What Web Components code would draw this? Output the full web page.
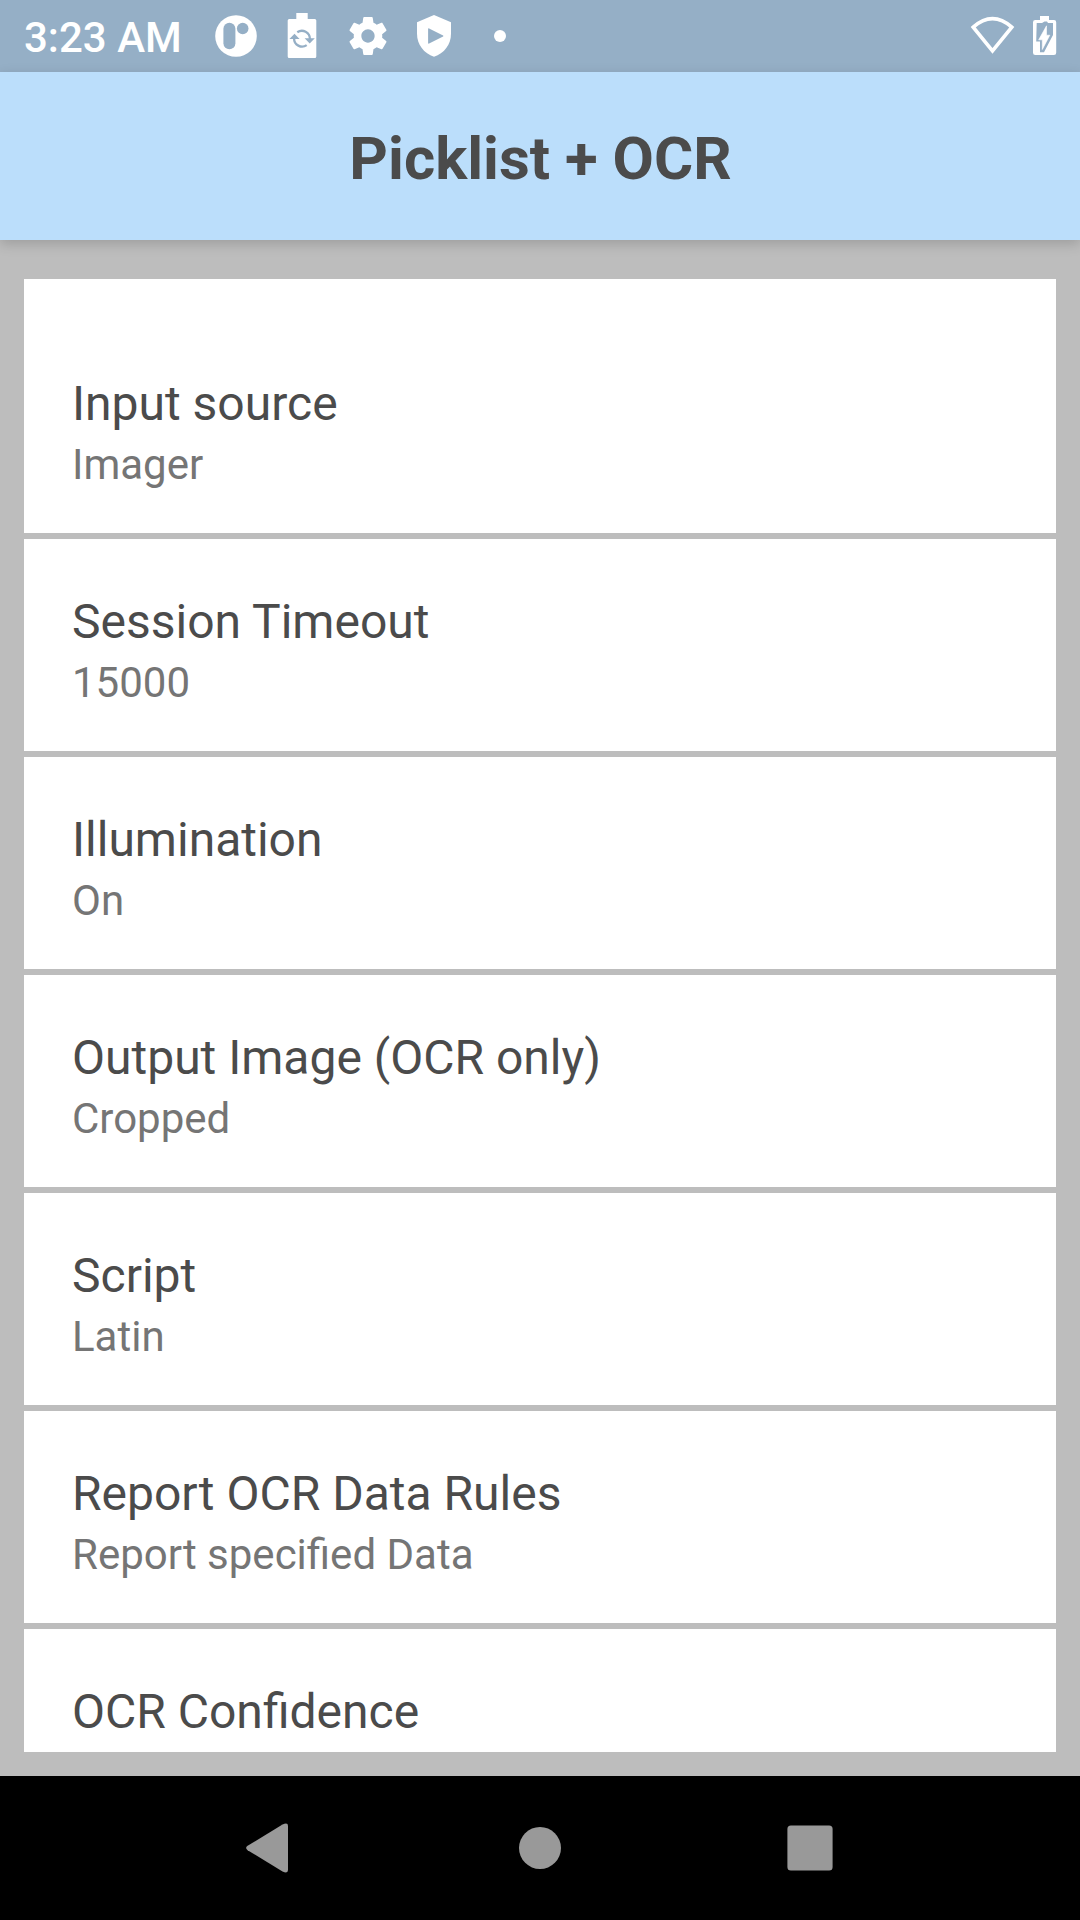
<!DOCTYPE html>
<html lang="en">
<head>
<meta charset="utf-8">
<title>Picklist + OCR</title>
<style>
html, body { margin: 0; padding: 0; }
body { width: 1080px; height: 1920px; overflow: hidden; font-family: Roboto, sans-serif; }
</style>
</head>
<body>
<settings-screen></settings-screen>
<script>
const define = (name, html) => customElements.define(name, class extends HTMLElement {
  constructor() {
    super();
    const t = document.createElement('template');
    t.innerHTML = html;
    this.attachShadow({ mode: 'open' }).append(t.content.cloneNode(true));
  }
});

define('status-bar', `
<style>
:host { display: flex; height: 72px; background: #95afc6; color: #fff; align-items: center; box-sizing: border-box; padding: 0 12px 0 24px; }
.time { width: 188px; font-size: 42px; font-weight: 500; line-height: 72px; white-space: nowrap; padding-top: 2px; box-sizing: border-box; height: 72px; }
.icons { display: flex; gap: 18px; flex: 1; }
.sys { display: flex; gap: 4px; }
svg { display: block; width: 48px; height: 48px; fill: #fff; }
.hole { fill: #95afc6; }
</style>
<div class="time">3:23 AM</div>
<div class="icons">
  <svg viewBox="0 0 48 48"><circle cx="24" cy="24" r="20.8"/><rect class="hole" x="11.4" y="10.7" width="12" height="26.6" rx="6"/><circle class="hole" cx="30.7" cy="16.5" r="5.8"/></svg>
  <svg viewBox="0 0 48 48"><path d="M18.3 1h11.4v6h7.1q1.5 0 1.5 1.5v36q0 1.500-1.500 1.500h-25.600q-1.500 0-1.500-1.500v-36q0-1.500 1.500-1.500h7.100z"/>
    <g fill="none" stroke="#95afc6" stroke-width="2.300"><path d="M19.300 20.300a8 8 0 0 1 12.600 6.700"/><path d="M28.700 33.100a8 8 0 0 1-12.600-6.700"/></g>
    <path class="hole" d="M26.600 26.300h10.200l-5.100 5.300zM11.400 27h10.200l-5.100-5.300z"/></svg>
  <svg viewBox="0 0 48 48"><path transform="translate(24 24) scale(1.900) translate(-12 -12)" d="M19.430 12.980c.04-.32.07-.64.07-.98s-.03-.66-.07-.98l2.110-1.650c.19-.15.24-.42.12-.64l-2-3.460c-.12-.22-.39-.3-.61-.22l-2.490 1c-.52-.4-1.080-.73-1.690-.98l-.38-2.650C14.460 2.180 14.250 2 14 2h-4c-.25 0-.46.18-.49.42l-.38 2.650c-.61.25-1.170.59-1.690.98l-2.490-1c-.23-.09-.49 0-.61.22l-2 3.460c-.13.22-.07.49.12.64l2.110 1.650c-.04.32-.07.65-.07.98s.03.66.07.98l-2.110 1.650c-.19.15-.24.42-.12.64l2 3.460c.12.22.39.3.61.22l2.490-1c.52.4 1.080.73 1.690.98l.38 2.650c.03.24.24.42.49.42h4c.25 0 .46-.18.49-.42l.38-2.650c.61-.25 1.170-.59 1.690-.98l2.490 1c.23.09.49 0 .61-.22l2-3.460c.12-.22.07-.49-.12-.64l-2.110-1.650zM12 15.500c-1.930 0-3.500-1.570-3.500-3.500s1.570-3.500 3.500-3.500 3.500 1.570 3.500 3.500-1.570 3.500-3.500 3.500z"/></svg>
  <svg viewBox="0 0 48 48"><path d="M24 3l17 7.300v11.500c0 10.600-7 20-17 22.900c-10-2.900-17-12.300-17-22.900v-11.500z"/><path class="hole" d="M18.100 17q0-1 1-.6l14 7q.7.600 0 1.200l-14 7q-1 .4-1-.6z"/></svg>
  <svg viewBox="0 0 48 48"><circle cx="24" cy="24" r="6"/></svg>
</div>
<div class="sys">
  <svg viewBox="0 0 48 48"><path d="M5.200 15.200q19.300-17 38.600 0L24.500 38.800z" fill="none" stroke="#fff" stroke-width="3.600"/></svg>
  <svg viewBox="0 0 48 48"><path d="M20 4h9v4h5q2.200 0 2.200 2.200v30.500q0 2.300-2.300 2.300h-18.600q-2.300 0-2.300-2.300v-30.500q0-2.200 2.200-2.200h4.800z"/><path class="hole" d="M16.700 11h5.300l2.500-1.500h2.500l1 1.500h5v12l-9 17.300h-4v-10.800h-3.800z"/><path d="M26.500 13.800v9.400h3.300L22.300 37.500v-9.700h-3.600z" stroke="#fff" stroke-width=".6"/></svg>
</div>
`);

define('app-bar', `
<style>
:host { display: flex; height: 168px; background: #bbdefb; color: #4b4b4b; align-items: center; justify-content: center; font-size: 60px; font-weight: 700; position: relative; z-index: 1; box-shadow: 0 4px 12px rgba(0,0,0,.17); }
span { padding-top: 5px; padding-left: 1px; white-space: nowrap; }
</style>
<span><slot></slot></span>
`);

define('setting-row', `
<style>
:host { display: flex; flex-direction: column; flex: none; height: 212px; box-sizing: border-box; padding: 54px 48px 0; background: #fff; }
:host([first]) { height: 254px; padding-top: 96px; }
.t { font-size: 48px; line-height: 57px; color: #4b4b4b; white-space: nowrap; }
.v { font-size: 42px; line-height: 50px; margin-top: 8px; color: #757575; white-space: nowrap; }
</style>
<div class="t"><slot></slot></div>
<div class="v"><slot name="value"></slot></div>
`);

define('nav-bar', `
<style>
:host { display: flex; height: 144px; background: #000; align-items: center; justify-content: center; gap: 198px; }
svg { display: block; width: 72px; height: 72px; fill: #999; }
</style>
<svg viewBox="0 0 72 72"><path d="M48.500 12.600q5.500-2.600 5.500 1.400v44q0 4-5.500 1.400L13.600 38.200q-3-2.200 0-4.400z"/></svg>
<svg viewBox="0 0 72 72"><circle cx="36" cy="36" r="21"/></svg>
<svg viewBox="0 0 72 72"><rect x="13.400" y="13.400" width="45.200" height="45.200" rx="3.500"/></svg>
`);

define('settings-screen', `
<style>
:host { display: flex; flex-direction: column; width: 1080px; height: 1920px; background: #bdbdbd; }
.content { flex: 1; min-height: 0; padding: 39px 24px 24px; display: flex; }
.list { flex: 1; display: flex; flex-direction: column; gap: 6px; overflow: hidden; }
</style>
<status-bar></status-bar>
<app-bar>Picklist + OCR</app-bar>
<div class="content"><div class="list">
  <setting-row first>Input source<span slot="value">Imager</span></setting-row>
  <setting-row>Session Timeout<span slot="value">15000</span></setting-row>
  <setting-row>Illumination<span slot="value">On</span></setting-row>
  <setting-row>Output Image (OCR only)<span slot="value">Cropped</span></setting-row>
  <setting-row>Script<span slot="value">Latin</span></setting-row>
  <setting-row>Report OCR Data Rules<span slot="value">Report specified Data</span></setting-row>
  <setting-row>OCR Confidence</setting-row>
</div></div>
<nav-bar></nav-bar>
`);
</script>
</body>
</html>
